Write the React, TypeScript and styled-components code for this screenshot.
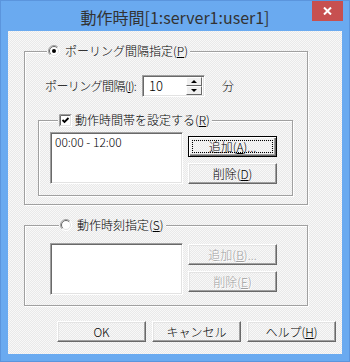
import styled, { createGlobalStyle, css } from 'styled-components';

const FONT = `"Noto Sans CJK JP", "Liberation Sans", sans-serif`;

// classic Windows dither used on the dialog face
const dither = css`
  background-color: #f0f0f0;
  background-image: repeating-conic-gradient(#e9e9e9 0 25%, #f8f8f8 0 50%);
  background-size: 2px 2px;
  background-attachment: fixed;
`;

const sunken = css`
  border: 1px solid;
  border-color: #a0a0a0 #fff #fff #a0a0a0;
  box-shadow: inset 1px 1px #696969, inset -1px -1px #e3e3e3;
`;

const GlobalStyle = createGlobalStyle`
  html, body {
    margin: 0;
    padding: 0;
  }
  body {
    font-family: ${FONT};
    font-size: 12px;
    font-weight: 300;
    color: #000;
  }
`;

const Window = styled.div`
  box-sizing: border-box;
  width: 350px;
  height: 362px;
  display: flex;
  flex-direction: column;
  padding: 0 7px 7px;
  background: #6aaaf0;
  border: 1px solid #5b95dd;
`;

const TitleBar = styled.div`
  position: relative;
  box-sizing: border-box;
  height: 30px;
  padding-top: 1px;
  display: flex;
  align-items: center;
  justify-content: center;
  font-size: 16px;
  font-weight: 400;
  color: #333;
`;

const CloseButton = styled.div`
  position: absolute;
  top: 0;
  right: -1px;
  width: 31px;
  height: 20px;
  background: #c75050;
  display: flex;
  align-items: center;
  justify-content: center;
`;

const Client = styled.div`
  flex: 1;
  ${dither}
  display: flex;
  flex-direction: column;
  padding: 13px 0 0 16px;
`;

const GroupBox = styled.fieldset<{ $width: number; $pad: string; $top?: number }>`
  box-sizing: border-box;
  width: ${p => p.$width}px;
  min-width: 0;
  margin: ${p => p.$top ?? 0}px 0 0 0;
  padding: ${p => p.$pad};
  border: 1px solid #a0a0a0;
  box-shadow: inset 1px 1px #fff, 1px 1px #fff;
`;

const Legend = styled.legend<{ $inset: number; $gap: number }>`
  display: flex;
  align-items: center;
  gap: ${p => p.$gap}px;
  height: 14px;
  margin-left: ${p => p.$inset}px;
  padding: 0 2px 0 1px;
  line-height: 14px;
  white-space: nowrap;
  ${dither}
`;

const SpinRow = styled.div`
  display: flex;
  align-items: center;
  margin-left: 7px;
`;

const FieldLabel = styled.span`
  width: 97px;
  line-height: 14px;
  letter-spacing: -0.6px;
  white-space: nowrap;
`;

const Edit = styled.div`
  box-sizing: border-box;
  width: 63px;
  height: 22px;
  display: flex;
  align-items: center;
  padding: 2px 2px 2px 6px;
  background: #fff;
  ${sunken}
`;

const EditText = styled.span`
  flex: 1;
  font-size: 13px;
  line-height: 16px;
`;

const Spin = styled.div`
  display: flex;
  flex-direction: column;
`;

const SpinButton = styled.div<{ $down?: boolean }>`
  box-sizing: border-box;
  width: 16px;
  height: 9px;
  display: flex;
  align-items: center;
  justify-content: center;
  background: #f0f0f0;
  border: 1px solid;
  border-color: #fff #696969 #696969 #fff;

  &::before {
    content: '';
    border-left: 3px solid transparent;
    border-right: 3px solid transparent;
    ${p =>
      p.$down
        ? css`border-top: 3px solid #000;`
        : css`border-bottom: 3px solid #000;`}
  }
`;

const Unit = styled.span`
  margin-left: 17px;
  line-height: 14px;
`;

const ListRow = styled.div`
  display: flex;
  gap: 5px;
`;

const ListBox = styled.div`
  box-sizing: border-box;
  width: 133px;
  height: 52px;
  padding: 2px 4px;
  background: #fff;
  line-height: 13px;
  ${sunken}
`;

const ButtonColumn = styled.div<{ $top: number }>`
  display: flex;
  flex-direction: column;
  gap: 6px;
  margin-top: ${p => p.$top}px;
`;

const Button = styled.button<{ $default?: boolean }>`
  position: relative;
  box-sizing: border-box;
  width: 89px;
  height: 21px;
  margin: 0;
  padding: 0;
  font-family: ${FONT};
  font-size: 12px;
  font-weight: 300;
  line-height: 14px;
  color: #000;
  ${dither}
  border: 1px solid;
  border-color: #fff #696969 #696969 #fff;
  box-shadow: inset -1px -1px #a0a0a0, inset 1px 1px #e3e3e3;

  &:disabled {
    color: #a0a0a0;
    text-shadow: 1px 1px #fff;
  }

  ${p =>
    p.$default &&
    css`
      border-color: #000;
      box-shadow: inset 1px 1px #fff, inset -1px -1px #696969, inset -2px -2px #a0a0a0;

      &::after {
        content: '';
        position: absolute;
        inset: 3px;
        border: 1px dotted #000;
      }
    `}
`;

const Footer = styled.div`
  display: flex;
  justify-content: flex-end;
  gap: 6px;
  margin: 15px 6px 0 0;
`;

const Radio = ({ checked }: { checked?: boolean }) => (
  <svg width="12" height="12" viewBox="0 0 12 12">
    <circle cx="6" cy="6" r="5.5" fill="#fff" />
    <path d="M2.1 9.9 A5.5 5.5 0 0 1 9.9 2.1" fill="none" stroke="#a0a0a0" />
    <path d="M2.8 9.2 A4.5 4.5 0 0 1 9.2 2.8" fill="none" stroke="#696969" />
    <path d="M9.9 2.1 A5.5 5.5 0 0 1 2.1 9.9" fill="none" stroke="#fff" />
    <path d="M9.2 2.8 A4.5 4.5 0 0 1 2.8 9.2" fill="none" stroke="#e3e3e3" />
    {checked && <circle cx="6" cy="6" r="2" fill="#000" />}
  </svg>
);

const Checkbox = () => (
  <svg width="13" height="13" viewBox="0 0 13 13">
    <rect x="0" y="0" width="13" height="13" fill="#fff" />
    <path d="M0.5 12.5 V0.5 H12.5" fill="none" stroke="#a0a0a0" />
    <path d="M1.5 11.5 V1.5 H11.5" fill="none" stroke="#696969" />
    <path d="M1.5 11.5 H11.5 V1.5" fill="none" stroke="#e3e3e3" />
    <path d="M3.5 6 L5.5 8 L9.5 4" fill="none" stroke="#000" strokeWidth="1.8" />
  </svg>
);

export default function App() {
  return (
    <>
      <GlobalStyle />
      <Window>
        <TitleBar>
          動作時間[1:server1:user1]
          <CloseButton>
            <svg width="9" height="8" viewBox="0 0 9 8">
              <path d="M1 0.5 L8 7.5 M8 0.5 L1 7.5" stroke="#fff" strokeWidth="2" />
            </svg>
          </CloseButton>
        </TitleBar>
        <Client>
          <GroupBox $width={284} $pad="17px 0 8px 13px">
            <Legend $inset={9} $gap={5}>
              <Radio checked />
              <span>ポーリング間隔指定(<u>P</u>)</span>
            </Legend>
            <SpinRow>
              <FieldLabel>ポーリング間隔(<u>I</u>):</FieldLabel>
              <Edit>
                <EditText>10</EditText>
                <Spin>
                  <SpinButton />
                  <SpinButton $down />
                </Spin>
              </Edit>
              <Unit>分</Unit>
            </SpinRow>
            <GroupBox $width={255} $pad="5px 0 11px 11px" $top={16}>
              <Legend $inset={8} $gap={3}>
                <Checkbox />
                <span>動作時間帯を設定する(<u>R</u>)</span>
              </Legend>
              <ListRow>
                <ListBox>00:00 - 12:00</ListBox>
                <ButtonColumn $top={4}>
                  <Button $default>追加(<u>A</u>)...</Button>
                  <Button>削除(<u>D</u>)</Button>
                </ButtonColumn>
              </ListRow>
            </GroupBox>
          </GroupBox>

          <GroupBox $width={284} $pad="11px 0 10px 25px" $top={13}>
            <Legend $inset={9} $gap={5}>
              <Radio />
              <span>動作時刻指定(<u>S</u>)</span>
            </Legend>
            <ListRow>
              <ListBox />
              <ButtonColumn $top={1}>
                <Button disabled>追加(<u>B</u>)...</Button>
                <Button disabled>削除(<u>E</u>)</Button>
              </ButtonColumn>
            </ListRow>
          </GroupBox>

          <Footer>
            <Button>OK</Button>
            <Button>キャンセル</Button>
            <Button>ヘルプ(<u>H</u>)</Button>
          </Footer>
        </Client>
      </Window>
    </>
  );
}
